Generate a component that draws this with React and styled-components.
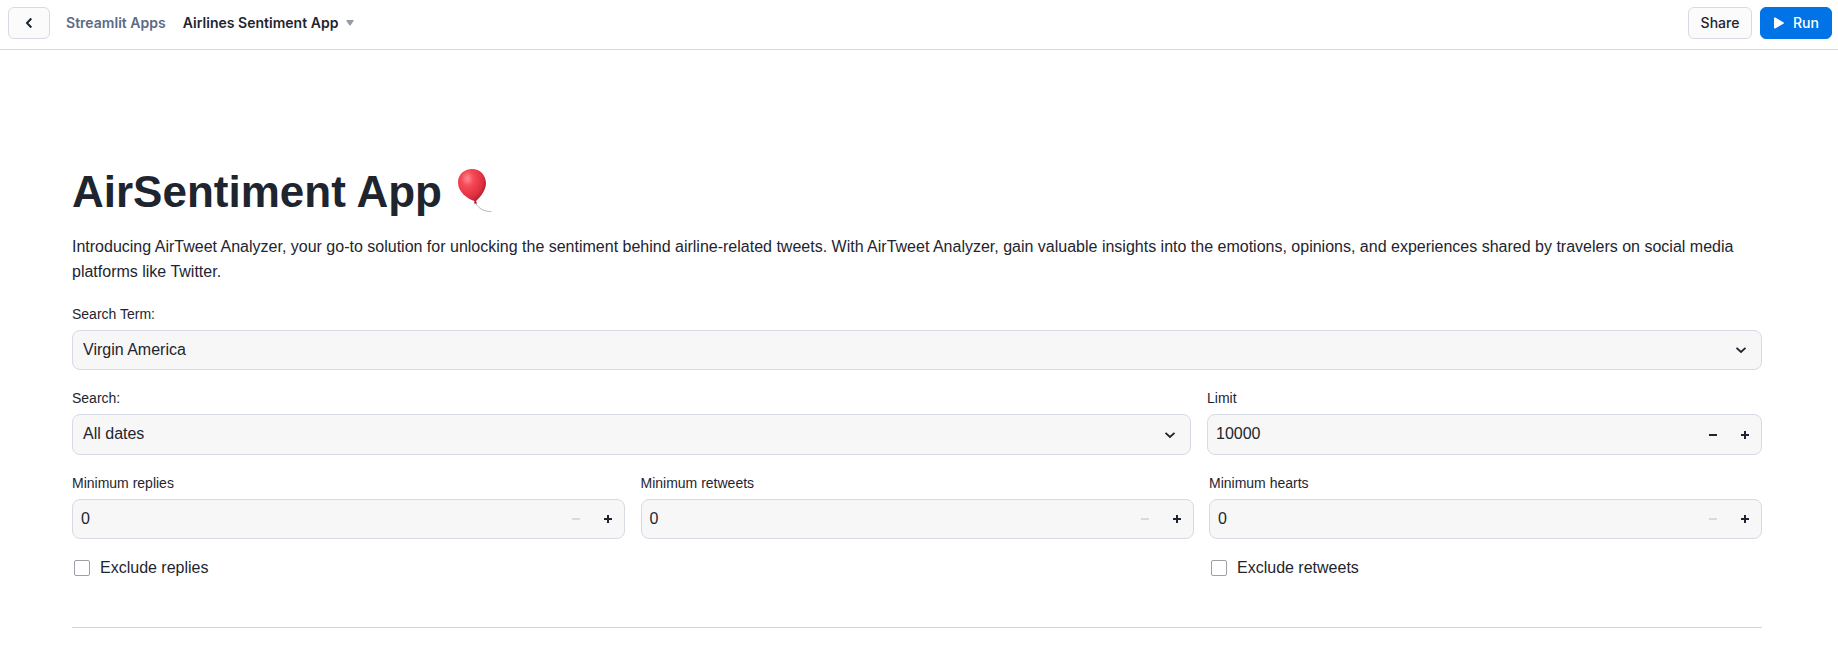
import React from "react";
import styled, { createGlobalStyle } from "styled-components";

const GlobalStyle = createGlobalStyle`
  * { box-sizing: border-box; }
  body {
    margin: 0;
    background: #fff;
    color: #1e252f;
    font-family: "Liberation Sans", Arial, Helvetica, sans-serif;
    overflow: hidden;
  }
  button { font: inherit; color: inherit; margin: 0; padding: 0; }
`;

const Header = styled.header`
  display: flex;
  align-items: center;
  height: 50px;
  padding: 0 6px 4px 8px;
  border-bottom: 1px solid #d5dae4;
  font-family: Inter, sans-serif;
  font-size: 14px;
`;

const HeaderButton = styled.button`
  display: flex;
  align-items: center;
  justify-content: center;
  width: ${(p) => p.$width}px;
  height: 32px;
  gap: 9px;
  border-radius: 6px;
  font-weight: 500;
  padding-left: ${(p) => (p.$primary ? 1 : 0)}px;
  border: 1px solid ${(p) => (p.$primary ? "#0073e6" : "#d5dae4")};
  background: ${(p) => (p.$primary ? "#0073e6" : "#fbfbfb")};
  color: ${(p) => (p.$primary ? "#fff" : "#1e252f")};
`;

const Crumbs = styled.nav`
  display: flex;
  align-items: center;
  flex: 1;
  margin-left: 16px;
  font-weight: 600;
  line-height: 20px;
`;

const Crumb = styled.span`
  color: ${(p) => (p.$current ? "#1e252f" : "#5d6a85")};
  letter-spacing: 0.02px;
  margin-right: ${(p) => (p.$current ? 8 : 17)}px;
`;

const Actions = styled.div`
  display: flex;
  gap: 8px;
`;

const Main = styled.main`
  display: flex;
  flex-direction: column;
  padding: 110px 76px 0 72px;
`;

const Title = styled.h1`
  display: flex;
  align-items: center;
  margin: 0;
  height: 64px;
  font-size: 44px;
  line-height: 64px;
  font-weight: 700;
`;

const BalloonArt = styled.svg`
  margin: 0 0 2px 15px;
`;

const Intro = styled.p`
  margin: 10px 0 0;
  font-size: 16px;
  line-height: 25px;
  height: 50px;
`;

const Row = styled.div`
  display: grid;
  grid-template-columns: ${(p) => p.$columns};
  column-gap: ${(p) => p.$gap ?? 16}px;
  margin-top: ${(p) => p.$top}px;
`;

const Field = styled.div`
  display: flex;
  flex-direction: column;
`;

const Label = styled.label`
  height: 26px;
  font-size: 14px;
  line-height: 20px;
`;

const Control = styled.div`
  display: flex;
  align-items: center;
  height: ${(p) => p.$height ?? 40}px;
  padding-left: ${(p) => p.$indent}px;
  border: 1px solid #d5dae4;
  border-radius: 8px;
  background: #f7f7f7;
  font-size: 16px;
`;

const Value = styled.span`
  flex: 1;
  line-height: 24px;
  padding-bottom: 1px;
`;

const Arrow = styled.svg`
  margin-right: 14px;
`;

const StepButton = styled.button`
  display: flex;
  align-items: center;
  justify-content: center;
  width: 32px;
  height: 100%;
  border: 0;
  background: none;
  color: ${(p) => (p.$off ? "#d5dae4" : "#1e252f")};
`;

const Check = styled.label`
  display: flex;
  align-items: center;
  height: 24px;
  padding-left: 2px;
  gap: 10px;
  font-size: 16px;
  line-height: 24px;
`;

const Box = styled.span`
  width: 16px;
  height: 16px;
  border: 1px solid #9da0a6;
  border-radius: 2px;
  background: #fff;
`;

const Divider = styled.hr`
  width: 100%;
  height: 1px;
  margin: 47px 0 0;
  border: 0;
  background: #d2d4d8;
`;

const Balloon = () => (
  <BalloonArt width="36" height="46" viewBox="0 0 36 46">
    <defs>
      <radialGradient id="skin" cx="0.34" cy="0.28" r="0.78">
        <stop offset="0" stopColor="#ff8a92" />
        <stop offset="0.28" stopColor="#f64a58" />
        <stop offset="0.7" stopColor="#df2f40" />
        <stop offset="1" stopColor="#a01826" />
      </radialGradient>
    </defs>
    <path d="M18.5 35C22 41 27 43.5 34.5 43.6" fill="none" stroke="#b9b9b9" strokeWidth="1" />
    <path d="M15 1C23 1 29 7 29 15.5C29 22 23 29.5 19 33L20 35.4H17L17.5 33C10 30.5 1 24 1 14.5C1 6.5 7 1 15 1Z" fill="url(#skin)" />
  </BalloonArt>
);

const Chevron = () => (
  <Arrow width="12" height="12" viewBox="0 0 12 12" fill="none" stroke="#1e252f" strokeWidth="1.8">
    <path d="M1.5 3.8L6 8L10.5 3.8" />
  </Arrow>
);

const Stepper = ({ label, value, disabled, height }) => (
  <Field>
    <Label>{label}</Label>
    <Control $indent={8} $height={height}>
      <Value>{value}</Value>
      <StepButton $off={disabled} aria-label="Decrease">
        <svg width="8" height="8"><path d="M0 3h8v2H0z" fill="currentColor" /></svg>
      </StepButton>
      <StepButton aria-label="Increase">
        <svg width="8" height="8"><path d="M0 3h3V0h2v3h3v2H5v3H3V5H0z" fill="currentColor" /></svg>
      </StepButton>
    </Control>
  </Field>
);

const Select = ({ label, value, height }) => (
  <Field>
    <Label>{label}</Label>
    <Control $indent={10} $height={height}>
      <Value>{value}</Value>
      <Chevron />
    </Control>
  </Field>
);

export default function App() {
  return (
    <>
      <GlobalStyle />
      <Header>
        <HeaderButton $width={42} aria-label="Back">
          <svg width="8" height="12" viewBox="0 0 8 12" fill="none" stroke="#1e252f" strokeWidth="2">
            <path d="M6.3 1.5L2 6L6.3 10.5" />
          </svg>
        </HeaderButton>
        <Crumbs>
          <Crumb>Streamlit Apps</Crumb>
          <Crumb $current>Airlines Sentiment App</Crumb>
          <svg width="8" height="6" viewBox="0 0 8 6">
            <path d="M1 0H7Q8.2 0 7.6 1L4.8 5Q4 6 3.2 5L.4 1Q-.2 0 1 0Z" fill="#959ca6" />
          </svg>
        </Crumbs>
        <Actions>
          <HeaderButton $width={64}>Share</HeaderButton>
          <HeaderButton $width={72} $primary>
            <svg width="10" height="12" viewBox="0 0 10 12">
              <path d="M0 1.2Q0 0 1.2.6L9.4 5.2Q10.4 6 9.4 6.8L1.2 11.4Q0 12 0 10.8Z" fill="#fff" />
            </svg>
            Run
          </HeaderButton>
        </Actions>
      </Header>
      <Main>
        <Title>
          <span>AirSentiment App</span>
          <Balloon />
        </Title>
        <Intro>
          Introducing AirTweet Analyzer, your go-to solution for unlocking the sentiment behind airline-related tweets. With AirTweet Analyzer, gain valuable insights into the emotions, opinions, and experiences shared by travelers on social media platforms like Twitter.
        </Intro>
        <Row $columns="1fr" $top={20}>
          <Select label="Search Term:" value="Virgin America" />
        </Row>
        <Row $columns="1119px 1fr" $top={18}>
          <Select label="Search:" value="All dates" height={41} />
          <Stepper label="Limit" value="10000" height={41} />
        </Row>
        <Row $columns="repeat(3, 553px)" $gap={15.5} $top={18}>
          <Stepper label="Minimum replies" value="0" disabled />
          <Stepper label="Minimum retweets" value="0" disabled />
          <Stepper label="Minimum hearts" value="0" disabled />
        </Row>
        <Row $columns="repeat(3, 553px)" $gap={15.5} $top={17}>
          <Check><Box />Exclude replies</Check>
          <span />
          <Check><Box />Exclude retweets</Check>
        </Row>
        <Divider />
      </Main>
    </>
  );
}
